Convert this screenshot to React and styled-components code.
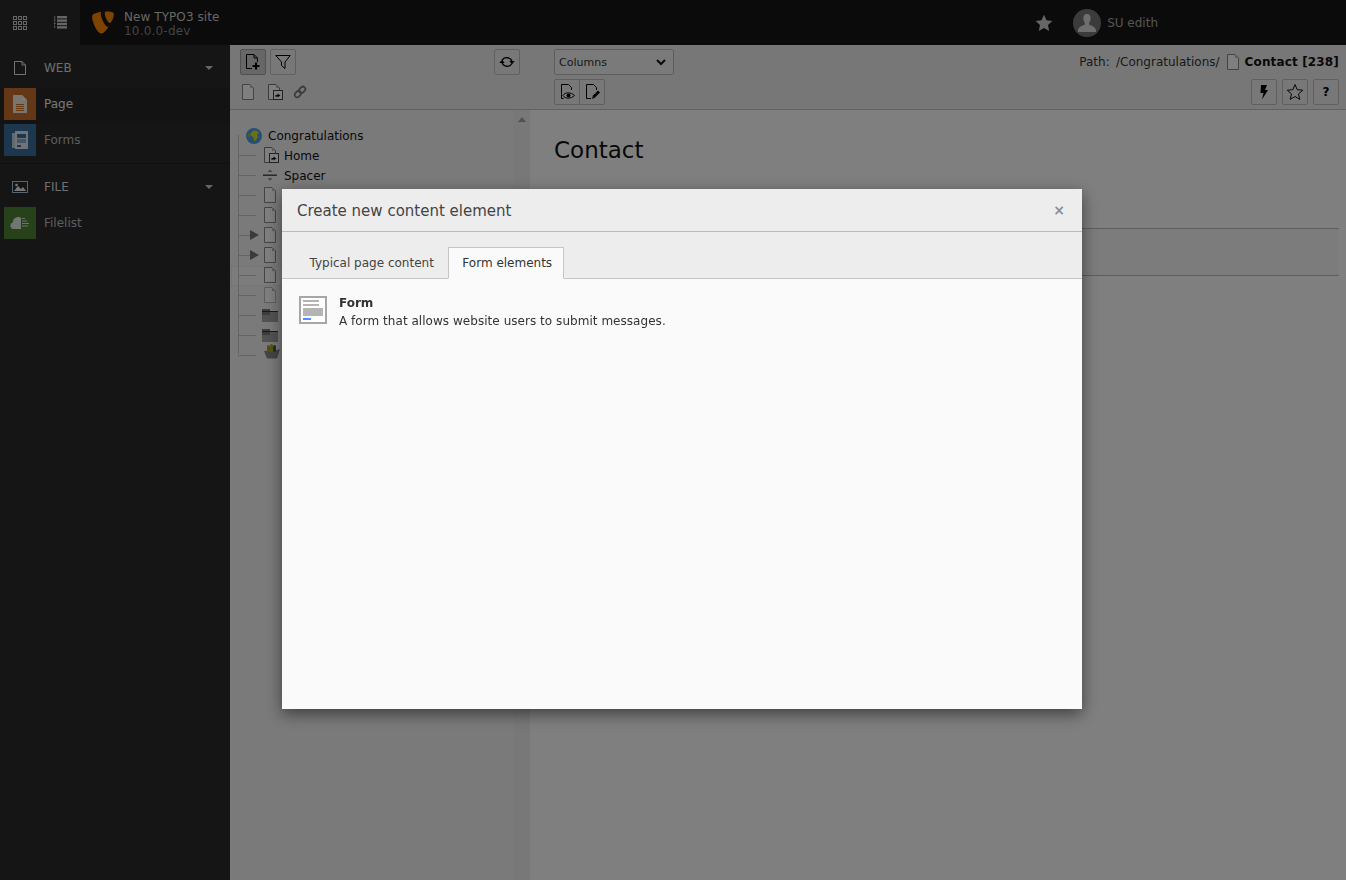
import React from "react";
import styled, { createGlobalStyle } from "styled-components";
import { SiTypo3 } from "react-icons/si";

const Global = createGlobalStyle`
  html, body { margin: 0; height: 100%; overflow: hidden; }
  body { font-family: "DejaVu Sans", Verdana, sans-serif; font-size: 12px; color: #000; }
  * { box-sizing: border-box; }
`;

const Page = styled.div`display: flex; flex-direction: column; height: 880px; width: 1346px;`;

/* ---------- top bar ---------- */
const Topbar = styled.header`display: flex; align-items: center; height: 45px; background: #161616; flex: none;`;
const TopButtons = styled.div`display: flex; width: 80px; height: 45px; background: #2a2a2a; flex: none;`;
const TopButton = styled.div`width: 40px; height: 45px; display: flex; align-items: center; justify-content: center; color: #ccc;`;
const Brand = styled.div`display: flex; align-items: center; gap: 10px; padding-left: 12px; flex: 1;`;
const BrandLogo = styled.div`display: flex; color: #ff8700; width: 22px; height: 24px;`;
const BrandText = styled.div`display: flex; flex-direction: column; line-height: 14px; padding-top: 2px;`;
const SiteName = styled.span`color: #ccc; font-size: 12px; letter-spacing: 0.07px;`;
const SiteVersion = styled.span`color: #888; font-size: 12px; letter-spacing: 0.2px;`;
const TopRight = styled.div`display: flex; align-items: center; padding-right: 188px;`;
const StarWrap = styled.div`display: flex; color: #ccc; margin-right: 20px;`;
const Avatar = styled.div`width: 28px; height: 28px; border-radius: 50%; background: #777; display: flex; align-items: center; justify-content: center; overflow: hidden; margin-right: 6px;`;
const UserName = styled.span`color: #aaa; font-size: 12px;`;

/* ---------- workspace ---------- */
const Workspace = styled.div`display: flex; flex: 1; min-height: 0;`;

const Sidebar = styled.nav`width: 230px; flex: none; background: #2a2a2a;`;
const Group = styled.section`
  padding-bottom: 3px;
  border-bottom: ${(p) => (p.$last ? "none" : "1px solid #212121")};
`;
const GroupHead = styled.div`display: flex; align-items: center; height: 43px; padding: 2px 17px 0 12px; color: #ddd;`;
const GroupIcon = styled.span`display: flex; width: 16px; margin-right: 16px;`;
const GroupLabel = styled.span`flex: 1; font-size: 12px; color: #ddd;`;
const Caret = styled.span`width: 0; height: 0; border-left: 4px solid transparent; border-right: 4px solid transparent; border-top: 4px solid #ccc; margin-top: 1px;`;
const ModuleRow = styled.div`
  display: flex; gap: 8px; height: 36px; padding-left: 4px;
  background: ${(p) => (p.$active ? "#262626" : "transparent")};
`;
const Tile = styled.span`width: 32px; height: 32px; display: flex; align-items: center; justify-content: center; background: ${(p) => p.$bg};`;
const ModuleLabel = styled.span`line-height: 32px; font-size: 12px; color: ${(p) => (p.$active ? "#eee" : "#bbb")};`;

/* ---------- tree column ---------- */
const TreeColumn = styled.aside`width: 300px; flex: none; display: flex; flex-direction: column; background: #f5f5f5;`;
const HeaderBar = styled.div`height: 65px; flex: none; background: #eeeeee; border-bottom: 1px solid #c3c3c3;`;
const TreeHeader = styled(HeaderBar)`padding: 4px 10px 0 10px; display: flex; flex-direction: column; gap: 5px;`;
const ToolRow = styled.div`display: flex; gap: 4px; height: 26px;`;
const Spacer = styled.span`flex: 1;`;
const Btn = styled.span`
  width: 26px; height: 26px; display: flex; align-items: center; justify-content: center;
  border: 1px solid #c0c0c0; border-radius: 2px; background: ${(p) => (p.$pressed ? "#cfcfcf" : "#f0f0f0")};
  font-weight: bold; font-size: 12px; color: #000;
`;
const PressedBtn = styled(Btn)`border-color: #a0a0a0;`;
const TreeTools = styled.div`display: flex; align-items: center; gap: 10px; height: 26px; padding-left: 2px; margin-top: -1px;`;
const ToolIcon = styled.span`display: flex; width: 16px; flex: none; margin-left: ${(p) => p.$left || 0}px;`;
const TreeBody = styled.div`flex: 1; display: flex; min-height: 0;`;
const TreeScroll = styled.div`flex: 1; padding-top: 16px;`;
const ScrollTrack = styled.div`width: 17px; flex: none; background: #f1f1f1; display: flex; justify-content: center; padding-top: 7px;`;
const ScrollArrow = styled.span`width: 0; height: 0; border-left: 4px solid transparent; border-right: 4px solid transparent; border-bottom: 5px solid #a3a3a3;`;
const RootRow = styled.div`display: flex; align-items: center; gap: 6px; height: 20px; padding-left: 16px; font-size: 12px; color: #111;`;
const TreeList = styled.div`
  position: relative; margin-top: -10px; padding-top: 10px;
  &::before { content: ""; position: absolute; left: 8px; top: -1px; bottom: 12px; width: 1px; background: #c8c8c8; }
`;
const TreeRow = styled.div`
  display: flex; align-items: center; height: 20px; margin-left: 1px; padding-left: 7px; font-size: 12px; color: #111;
  background: ${(p) => (p.$selected ? "#f9f9f9" : "transparent")};
  box-shadow: ${(p) => (p.$selected ? "inset 0 0 0 1px #ededed" : "none")};
`;
const Lead = styled.span`display: flex; align-items: center; width: 26px; flex: none;`;
const Connector = styled.span`height: 1px; margin-top: -2px; background: #c8c8c8; width: ${(p) => (p.$short ? 12 : 18)}px;`;
const Expander = styled.span`width: 0; height: 0; margin-top: -2px; border-top: 5px solid transparent; border-bottom: 5px solid transparent; border-left: 9px solid #777;`;
const RowIcon = styled.span`
  display: flex; width: 16px; flex: none;
  margin-top: ${(p) => p.$up ?? -2}px;
  margin-left: ${(p) => p.$left || 0}px;
  margin-right: ${(p) => p.$right ?? 4}px;
`;

/* ---------- content column ---------- */
const ContentColumn = styled.main`flex: 1; display: flex; flex-direction: column; background: #fff; min-width: 0;`;
const DocHeader = styled(HeaderBar)`padding: 4px 7px 0 24px; display: flex; flex-direction: column; gap: 4px;`;
const DocRow = styled.div`display: flex; align-items: center; height: 26px;`;
const SelectWrap = styled.div`position: relative; width: 120px; height: 26px;`;
const ViewSelect = styled.select`
  appearance: none; display: block; width: 100%; height: 100%; font-family: "DejaVu Sans", sans-serif; font-size: 11px; color: #333;
  background: #f5f5f5; border: 1px solid #bbb; border-radius: 2px; padding: 0 0 0 4px; margin: 0;
`;
const SelectChevron = styled.svg`position: absolute; right: 8px; top: 10px; pointer-events: none;`;
const PathText = styled.div`display: flex; align-items: center; gap: 2px; font-size: 12px; color: #333; word-spacing: 2.5px;`;
const PathIcon = styled.span`display: flex; margin-left: 5px; margin-top: -1px;`;
const PathStrong = styled.strong`color: #111; letter-spacing: 0.15px; word-spacing: 0;`;
const BtnGroup = styled.div`display: flex; & > span { border-radius: 0; margin-left: -1px; } & > span:first-child { margin-left: 0; border-radius: 2px 0 0 2px; } & > span:last-child { border-radius: 0 2px 2px 0; }`;
const RightBtns = styled.div`display: flex; gap: 5px;`;
const ContentBody = styled.div`padding: 25px 7px 0 24px;`;
const Title = styled.h1`margin: 0; font-size: 23px; font-weight: 400; line-height: 30px; color: #111;`;
const Band = styled.div`height: 48px; margin-top: 63px; border-top: 1px solid #bdbdbd; border-bottom: 1px solid #bdbdbd; background: #f9f9f9;`;

/* ---------- modal ---------- */
const Backdrop = styled.div`position: fixed; inset: 0; background: rgba(0, 0, 0, 0.5);`;
const Modal = styled.div`
  position: fixed; left: 282px; top: 189px; width: 800px; height: 520px; background: #fafafa;
  box-shadow: 0 5px 15px rgba(0, 0, 0, 0.5); display: flex; flex-direction: column;
`;
const ModalHead = styled.div`display: flex; align-items: center; justify-content: space-between; height: 43px; padding: 1px 17px 0 15px; background: #ededed; border-bottom: 1px solid #bbb; flex: none;`;
const ModalTitle = styled.h4`margin: 0; font-size: 15px; font-weight: 400; color: #444;`;
const Close = styled.span`font-size: 14px; font-weight: 700; color: #8f8f8f; line-height: 1; margin-top: -2px;`;
const TabBar = styled.div`display: flex; align-items: flex-end; height: 47px; padding-left: 14px; background: #ededed; border-bottom: 1px solid #c6c6c6; flex: none;`;
const Tab = styled.div`
  height: 32px; line-height: 30px; font-size: 12px; margin-bottom: -1px;
  padding: ${(p) => (p.$active ? "0 11px 0 13px" : "0 13.5px 0 12.5px")};
  color: ${(p) => (p.$active ? "#333" : "#444")};
  background: ${(p) => (p.$active ? "#fafafa" : "transparent")};
  border: 1px solid ${(p) => (p.$active ? "#c6c6c6" : "transparent")};
  border-bottom-color: ${(p) => (p.$active ? "#fafafa" : "transparent")};
`;
const ModalBody = styled.div`padding: 15px 17px; flex: 1;`;
const ElementRow = styled.div`display: flex; gap: 12px; align-items: flex-start;`;
const ElementIcon = styled.span`display: flex; width: 28px; height: 28px; margin-top: 2px;`;
const ElementText = styled.div`display: flex; flex-direction: column; line-height: 18px; color: #333;`;
const ElementName = styled.strong`font-size: 12px; color: #333;`;
const ElementDesc = styled.span`font-size: 12px; letter-spacing: 0.04px;`;

/* ---------- icons ---------- */
const Svg = ({ s = 16, children, vb = "0 0 16 16" }) => (
  <svg width={s} height={s} viewBox={vb} fill="none">{children}</svg>
);
const PageOutline = ({ c = "#888" }) => (
  <>
    <path d="M.5 .5H8L11.500 4V15.500H.5Z" fill="#fff" stroke={c} />
    <path d="M8 1V4H11Z" fill="#bbb" />
  </>
);
const PageIcon = ({ c }) => <Svg><PageOutline c={c} /></Svg>;
const ShortcutIcon = () => (
  <Svg>
    <PageOutline c="#777" />
    <rect x="5.500" y="6.500" width="9" height="9" fill="#fff" stroke="#444" />
    <path d="M7.500 13V11H9.500V9.500L12.500 11.500L9.500 13.500V12.300H8.500V13Z" fill="#111" />
  </Svg>
);
const SpacerIcon = () => (
  <Svg>
    <rect x="1" y="7.500" width="14" height="1.400" fill="#444" />
    <path d="M5.500 5L8 2.500L10.500 5ZM5.500 11.300L8 13.800L10.500 11.300Z" fill="#888" />
  </Svg>
);
const FolderIcon = () => (
  <Svg>
    <path d="M0 2H8V4H16V15H0Z" fill="#a4a4a4" />
    <path d="M0 2H8V8H0Z" fill="#7a7a7a" />
    <rect x="0" y="4" width="16" height="1" fill="#333" />
  </Svg>
);
const RecyclerIcon = () => (
  <Svg>
    <path d="M0 8L13 7L16 6L13 15.500H3Z" fill="#8a8a8a" />
    <rect x="3" y="2" width="3" height="7" rx="1.500" fill="#b19a1a" />
    <rect x="6" y="1" width="3" height="8" rx="1.500" fill="#a3ad2a" />
    <rect x="9" y="2" width="3" height="7" rx="1.500" fill="#555" />
  </Svg>
);
const GlobeIcon = () => (
  <Svg>
    <circle cx="8" cy="8" r="8" fill="#4f9ee6" />
    <path d="M7 3C9 2 12 3 13 5L11 7L12 9L9 13L8 13L7.500 9L5 8L4 6Z" fill="#d8e028" />
    <path d="M2 6L4 7L3.500 9L2 8.500Z" fill="#a9c52d" />
  </Svg>
);
const GridIcon = () => (
  <svg width="14" height="14" viewBox="0 0 14 14" fill="none" stroke="currentColor" strokeWidth="1">
    {[0.5, 5.5, 10.5].flatMap((y) => [0.5, 5.5, 10.5].map((x) => <rect key={`${x}${y}`} x={x} y={y} width="3" height="3" />))}
  </svg>
);
const ListIcon = () => (
  <svg width="13" height="13" viewBox="0 0 13 13" fill="currentColor">
    <path d="M0 .5H1.500V1.500H0ZM.5 1.500H1V11.500H.5ZM0 3.500H1.500V4.500H0ZM0 7H1.500V8H0ZM0 10.500H1.500V11.500H0Z" />
    <rect x="3" y="0" width="10" height="2.400" /><rect x="3" y="3.400" width="10" height="2.400" />
    <rect x="3" y="6.800" width="10" height="2.400" /><rect x="3" y="10.200" width="10" height="2.400" />
  </svg>
);
const WebIcon = () => (
  <Svg><path d="M2.500 1.500H10L13.500 5V14.500H2.500Z" stroke="#e4e4e4" fill="none" /><path d="M10 1.500V5H13.500" stroke="#e4e4e4" /></Svg>
);
const FileGroupIcon = () => (
  <Svg>
    <rect x=".5" y="2.500" width="15" height="11" stroke="#a8cde8" />
    <path d="M2 12L6 7L9 10L11 8L14 12Z" fill="#eee" />
    <circle cx="4.500" cy="6" r="1.300" fill="#eee" />
  </Svg>
);
const TilePage = () => (
  <Svg s={18} vb="0 0 16 18">
    <path d="M1 0H10L15 5V18H1Z" fill="#fff" fillOpacity=".85" />
    <path d="M10 0L15 5H10Z" fill="#fff" fillOpacity=".5" />
    <path d="M4 9.500H12M4 11.500H12M4 13.500H12M4 15.500H12" stroke="#c96f25" />
  </Svg>
);
const TileForms = () => (
  <svg width="16" height="18" viewBox="0 0 16 18" fill="none">
    <rect x="0" y="2" width="3" height="15" fill="#fff" fillOpacity=".7" />
    <rect x="3" y="0" width="13" height="18" fill="#fff" fillOpacity=".85" />
    <path d="M5 3H14V7H5Z" fill="#3b6f9c" />
    <path d="M5 9H14M5 11H14" stroke="#3b6f9c" />
    <path d="M5 14H9V16H5Z" fill="#3b6f9c" />
  </svg>
);
const TileFiles = () => (
  <svg width="20" height="12" viewBox="0 0 20 12" fill="none">
    <path d="M11 .7A5.500 5.500 0 0 0 2.800 5.200A3.500 3.500 0 0 0 3.500 12H11Z" fill="#fff" fillOpacity=".85" />
    <path d="M12 1.500H15M12 4H17M12 6.500H19M12 9H18" stroke="#fff" strokeOpacity=".8" />
  </svg>
);
const StarSolid = () => (
  <svg width="18" height="18" viewBox="0 0 18 18"><path d="M9 .8L11.500 6.300L17.400 7L13 11L14.200 17L9 14L3.800 17L5 11L.6 7L6.500 6.300Z" fill="currentColor" /></svg>
);
const StarLine = () => (
  <svg width="18" height="18" viewBox="0 0 18 18"><path d="M9 1.500L11.200 6.700L16.800 7.200L12.500 10.900L13.800 16.400L9 13.500L4.200 16.400L5.500 10.900L1.200 7.200L6.800 6.700Z" fill="none" stroke="#111" /></svg>
);
const UserShape = () => (
  <svg width="20" height="20" viewBox="0 0 20 20"><path d="M10 1C13 1 14 3.500 13.500 6.500C13.200 8.500 12 9.500 12 11C12 12.500 18 12.500 19 17V19H1V17C2 12.500 8 12.500 8 11C8 9.500 6.800 8.500 6.500 6.500C6 3.500 7 1 10 1Z" fill="#ddd" /></svg>
);
const NewPage = () => (
  <Svg>
    <path d="M7 14.500H1.500V.5H9L12.500 4V8" stroke="#000" />
    <path d="M9 1V4H12" stroke="#000" />
    <path d="M11 8.500V15.500M7.500 12H14.500" stroke="#000" strokeWidth="2" />
  </Svg>
);
const Funnel = () => (
  <Svg><path d="M.8 1.500H15.200L10 8V14.500L6.500 11.500V8Z" stroke="#000" strokeLinejoin="round" /></Svg>
);
const Refresh = () => (
  <Svg>
    <path d="M3 6.500A5.500 5.500 0 0 1 13 7.500" stroke="#000" strokeWidth="1.300" />
    <path d="M10.300 7H15.700L13 10.300Z" fill="#000" />
    <path d="M13 9.500A5.500 5.500 0 0 1 3 8.500" stroke="#000" strokeWidth="1.300" />
    <path d="M.3 9H5.700L3 5.700Z" fill="#000" />
  </Svg>
);
const LinkIcon = () => (
  <Svg>
    <g stroke="#777" strokeWidth="1.700" fill="none" transform="rotate(-45 8 8)">
      <rect x="1.500" y="5.500" width="7" height="5" rx="2.500" />
      <rect x="7.500" y="5.500" width="7" height="5" rx="2.500" />
    </g>
  </Svg>
);
const PageView = () => (
  <Svg>
    <path d="M4.500 14.500H2.500V.5H9.500L12.500 3.500V6" stroke="#000" />
    <path d="M4 11.500C6 8 12 8 15.500 11.500C12 15 6 15 4 11.500Z" fill="#fff" stroke="#000" />
    <circle cx="9.500" cy="11.500" r="2" fill="#000" />
  </Svg>
);
const PageEdit = () => (
  <Svg>
    <path d="M7 14.500H2.500V.5H9.500L12.500 3.500V6" stroke="#000" />
    <path d="M8 15L9 11.500L14 6.500L16 8.500L11 13.500Z" fill="#000" />
  </Svg>
);
const Bolt = () => (
  <Svg><path d="M5 1H11L9 6H12L6 15.500L7.500 9H4.500Z" fill="#000" /></Svg>
);
const FormGlyph = () => (
  <svg width="28" height="28" viewBox="0 0 28 28" fill="none">
    <rect x="1" y="1" width="26" height="26" fill="#fff" stroke="#a6a6a6" strokeWidth="2" />
    <rect x="4" y="4" width="16" height="2" fill="#b4b4b4" />
    <rect x="4" y="8" width="16" height="2" fill="#b4b4b4" />
    <rect x="4" y="12" width="20" height="8" fill="#b4b4b4" />
    <rect x="4" y="22" width="8" height="2" fill="#4d90fe" />
  </svg>
);

const treeRows = [
  { icon: <ShortcutIcon />, label: "Home" },
  { icon: <SpacerIcon />, label: "Spacer", left: -2, right: 6 },
  { icon: <PageIcon /> },
  { icon: <PageIcon /> },
  { icon: <PageIcon />, exp: true },
  { icon: <PageIcon />, exp: true },
  { icon: <PageIcon />, selected: true },
  { icon: <PageIcon c="#bbb" /> },
  { icon: <FolderIcon />, left: -2 },
  { icon: <FolderIcon />, left: -2 },
  { icon: <RecyclerIcon />, up: -10 },
];

export default function App() {
  return (
    <>
      <Global />
      <Page>
        <Topbar>
          <TopButtons>
            <TopButton><GridIcon /></TopButton>
            <TopButton><ListIcon /></TopButton>
          </TopButtons>
          <Brand>
            <BrandLogo><SiTypo3 size={23} /></BrandLogo>
            <BrandText>
              <SiteName>New TYPO3 site</SiteName>
              <SiteVersion>10.0.0-dev</SiteVersion>
            </BrandText>
          </Brand>
          <TopRight>
            <StarWrap><StarSolid /></StarWrap>
            <Avatar><UserShape /></Avatar>
            <UserName>SU edith</UserName>
          </TopRight>
        </Topbar>
        <Workspace>
          <Sidebar>
            <Group>
              <GroupHead>
                <GroupIcon><WebIcon /></GroupIcon>
                <GroupLabel>WEB</GroupLabel>
                <Caret />
              </GroupHead>
              <ModuleRow $active>
                <Tile $bg="#c8702f"><TilePage /></Tile>
                <ModuleLabel $active>Page</ModuleLabel>
              </ModuleRow>
              <ModuleRow>
                <Tile $bg="#3b6f9c"><TileForms /></Tile>
                <ModuleLabel>Forms</ModuleLabel>
              </ModuleRow>
            </Group>
            <Group $last>
              <GroupHead>
                <GroupIcon><FileGroupIcon /></GroupIcon>
                <GroupLabel>FILE</GroupLabel>
                <Caret />
              </GroupHead>
              <ModuleRow>
                <Tile $bg="#4f8236"><TileFiles /></Tile>
                <ModuleLabel>Filelist</ModuleLabel>
              </ModuleRow>
            </Group>
          </Sidebar>
          <TreeColumn>
            <TreeHeader>
              <ToolRow>
                <PressedBtn $pressed><NewPage /></PressedBtn>
                <Btn><Funnel /></Btn>
                <Spacer />
                <Btn><Refresh /></Btn>
              </ToolRow>
              <TreeTools>
                <ToolIcon><PageIcon /></ToolIcon>
                <ToolIcon><ShortcutIcon /></ToolIcon>
                <ToolIcon $left={-2}><LinkIcon /></ToolIcon>
              </TreeTools>
            </TreeHeader>
            <TreeBody>
              <TreeScroll>
                <RootRow><GlobeIcon />Congratulations</RootRow>
                <TreeList>
                  {treeRows.map((r, i) => (
                    <TreeRow key={i} $selected={r.selected}>
                      <Lead>
                        <Connector $short={r.exp} />
                        {r.exp && <Expander />}
                      </Lead>
                      <RowIcon $up={r.up} $left={r.left} $right={r.right}>{r.icon}</RowIcon>
                      {r.label}
                    </TreeRow>
                  ))}
                </TreeList>
              </TreeScroll>
              <ScrollTrack><ScrollArrow /></ScrollTrack>
            </TreeBody>
          </TreeColumn>
          <ContentColumn>
            <DocHeader>
              <DocRow>
                <SelectWrap>
                  <ViewSelect defaultValue="Columns"><option>Columns</option></ViewSelect>
                  <SelectChevron width="10" height="7" viewBox="0 0 10 7" fill="none">
                    <path d="M1 1L5 5L9 1" stroke="#111" strokeWidth="2" />
                  </SelectChevron>
                </SelectWrap>
                <Spacer />
                <PathText>
                  Path: /Congratulations/
                  <PathIcon><PageIcon /></PathIcon>
                  <PathStrong>Contact [238]</PathStrong>
                </PathText>
              </DocRow>
              <DocRow>
                <BtnGroup>
                  <Btn><PageView /></Btn>
                  <Btn><PageEdit /></Btn>
                </BtnGroup>
                <Spacer />
                <RightBtns>
                  <Btn><Bolt /></Btn>
                  <Btn><StarLine /></Btn>
                  <Btn>?</Btn>
                </RightBtns>
              </DocRow>
            </DocHeader>
            <ContentBody>
              <Title>Contact</Title>
              <Band />
            </ContentBody>
          </ContentColumn>
        </Workspace>
      </Page>
      <Backdrop />
      <Modal>
        <ModalHead>
          <ModalTitle>Create new content element</ModalTitle>
          <Close>×</Close>
        </ModalHead>
        <TabBar>
          <Tab>Typical page content</Tab>
          <Tab $active>Form elements</Tab>
        </TabBar>
        <ModalBody>
          <ElementRow>
            <ElementIcon><FormGlyph /></ElementIcon>
            <ElementText>
              <ElementName>Form</ElementName>
              <ElementDesc>A form that allows website users to submit messages.</ElementDesc>
            </ElementText>
          </ElementRow>
        </ModalBody>
      </Modal>
    </>
  );
}
